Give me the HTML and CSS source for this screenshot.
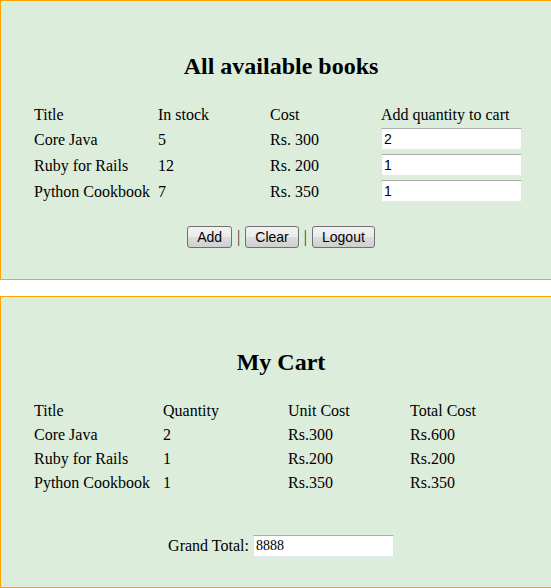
FILE: index.html
```html
<!DOCTYPE html>
<html>
<head>
<meta charset="utf-8">
<title>Books</title>
<link rel="stylesheet" href="styles.css">
</head>
<body>
<div class="panel panel-books">
  <h2 class="heading">All available books</h2>
  <div class="grid books-grid">
    <div class="cell head">Title</div>
    <div class="cell head">In stock</div>
    <div class="cell head">Cost</div>
    <div class="cell head">Add quantity to cart</div>

    <div class="cell row-text">Core Java</div>
    <div class="cell row-text">5</div>
    <div class="cell row-text">Rs. 300</div>
    <div class="cell input-cell"><input class="qty" type="text" value="2"></div>

    <div class="cell row-text">Ruby for Rails</div>
    <div class="cell row-text">12</div>
    <div class="cell row-text">Rs. 200</div>
    <div class="cell input-cell"><input class="qty" type="text" value="1"></div>

    <div class="cell row-text">Python Cookbook</div>
    <div class="cell row-text">7</div>
    <div class="cell row-text">Rs. 350</div>
    <div class="cell input-cell"><input class="qty" type="text" value="1"></div>
  </div>
  <div class="actions">
    <button class="btn" type="button">Add</button>
    <span class="sep">|</span>
    <button class="btn" type="button">Clear</button>
    <span class="sep">|</span>
    <button class="btn" type="button">Logout</button>
  </div>
</div>

<div class="panel panel-cart">
  <h2 class="heading">My Cart</h2>
  <div class="grid cart-grid">
    <div class="cell">Title</div>
    <div class="cell">Quantity</div>
    <div class="cell">Unit Cost</div>
    <div class="cell">Total Cost</div>

    <div class="cell">Core Java</div>
    <div class="cell">2</div>
    <div class="cell">Rs.300</div>
    <div class="cell">Rs.600</div>

    <div class="cell">Ruby for Rails</div>
    <div class="cell">1</div>
    <div class="cell">Rs.200</div>
    <div class="cell">Rs.200</div>

    <div class="cell">Python Cookbook</div>
    <div class="cell">1</div>
    <div class="cell">Rs.350</div>
    <div class="cell">Rs.350</div>
  </div>
  <div class="total">
    <span class="total-label">Grand Total:</span>
    <input class="total-input" type="text" value="8888">
  </div>
</div>
</body>
</html>
```

FILE: styles.css
```css
html, body {
  margin: 0;
  padding: 0;
  overflow: hidden;
  background: #ffffff;
}

body {
  font-family: "Liberation Serif", "Times New Roman", serif;
  font-size: 16px;
  line-height: 18px;
  color: #000000;
  width: 551px;
  height: 588px;
}

.panel {
  width: 560px;
  border: 1px solid #ffa500;
  background: #ddeddb;
  padding: 51px 0 0 0;
  box-sizing: content-box;
}

.panel-books {
  height: 227px;
}

.panel-cart {
  margin-top: 16px;
  height: 239px;
}

.heading {
  margin: 0;
  font-size: 24px;
  line-height: 28px;
  font-weight: bold;
  text-align: center;
}

.grid {
  display: grid;
  margin-left: 33px;
  row-gap: 2px;
}

.books-grid {
  margin-top: 24px;
  grid-template-columns: 124px 112px 111px 141px;
  grid-template-rows: 20px 24px 24px 24px;
}

.cart-grid {
  margin-top: 24px;
  grid-template-columns: 129px 125px 122px 120px;
  grid-auto-rows: 22px;
}

.cell {
  align-self: center;
  white-space: nowrap;
}

.head {
  align-self: start;
  margin-top: 2px;
}

.row-text {
  align-self: start;
  margin-top: 5px;
}

.input-cell {
  align-self: end;
  height: 22px;
}

.qty,
.total-input {
  display: block;
  box-sizing: border-box;
  width: 141px;
  height: 22px;
  margin: 0;
  padding: 0 2px;
  border: 1px solid #e2e3ea;
  border-top-color: #abadb3;
  border-bottom-color: #e3e9ef;
  background: #ffffff;
  color: #000000;
  font-family: "Liberation Sans", Arial, sans-serif;
  font-size: 14px;
  outline: none;
}

.total-input {
  font-family: "Liberation Serif", "Times New Roman", serif;
  font-size: 14px;
}

.actions {
  margin-top: 24px;
  display: flex;
  justify-content: center;
  align-items: center;
  gap: 5px;
  height: 22px;
}

.sep {
  line-height: 18px;
  color: #333333;
}

.btn {
  box-sizing: border-box;
  height: 22px;
  margin: 0;
  padding: 0 9px;
  border: 1px solid #707070;
  border-radius: 3px;
  background: linear-gradient(#f2f2f2 0%, #ebebeb 50%, #dddddd 51%, #cfcfcf 100%);
  font-family: "Liberation Sans", Arial, sans-serif;
  font-size: 14px;
  color: #000000;
}

.total {
  margin-top: 41px;
  display: flex;
  justify-content: center;
  align-items: center;
  gap: 4px;
  height: 22px;
}
```
